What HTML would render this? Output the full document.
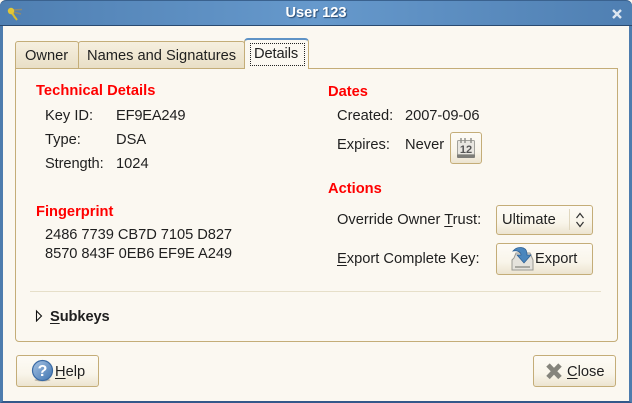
<!DOCTYPE html>
<html>
<head>
<meta charset="utf-8">
<style>
html,body{margin:0;padding:0;background:#fbf8f1;}
body{width:632px;height:403px;position:relative;overflow:hidden;font-family:"Liberation Sans",sans-serif;font-size:14.67px;color:#1f1f1f;}
.t{position:absolute;white-space:nowrap;line-height:16px;}
.h{position:absolute;white-space:nowrap;line-height:16px;color:#ff0000;font-weight:bold;}
.b{position:absolute;box-sizing:border-box;border:1px solid #c4ad78;border-radius:3px;background:linear-gradient(#fdfbf6,#f9f5ea 60%,#ece4d0);}
u{text-underline-offset:2px;}
</style>
</head>
<body>
<div style="position:absolute;left:0;top:0;width:632px;height:403px;box-sizing:border-box;border:3px solid #4d7cae;border-top:0;border-bottom-width:2px;border-radius:6px 6px 0 0;border-bottom-color:#33588a;"></div>
<div style="position:absolute;left:0;top:0;width:632px;height:26px;border-radius:6px 6px 0 0;background:linear-gradient(90deg,#4f7fb2,#6699cc 50%,#4f7fb2);border-top:1px solid #3a628f;border-bottom:1px solid #2a4a70;box-sizing:border-box;"></div>
<svg style="position:absolute;left:0;top:0" width="30" height="26" viewBox="0 0 30 26"><path d="M12 10L22 9.5M13 12L21 14" stroke="#8d8a72" stroke-width="1.6" fill="none"/><path d="M11 12L17 20M12 12L15 18" stroke="#d8bc30" stroke-width="1.9" fill="none"/><circle cx="11" cy="11" r="3.2" fill="#e2c636"/></svg>
<div class="t" style="left:0;width:632px;text-align:center;top:5px;color:#fff;font-weight:bold;text-shadow:1px 1px 1px #2a4a70;">User 123</div>
<svg style="position:absolute;left:612px;top:9px" width="10" height="10" viewBox="0 0 10 10"><path d="M1 1L9 9M9 1L1 9" stroke="#dce6f0" stroke-width="2.4"/></svg>

<div style="position:absolute;left:15px;top:68px;width:603px;height:274px;box-sizing:border-box;border:1px solid #c4ad78;border-radius:0 0 4px 4px;"></div>
<div style="position:absolute;left:15px;top:41px;width:64px;height:28px;box-sizing:border-box;border:1px solid #c4ad78;border-radius:3px 3px 0 0;background:linear-gradient(#f6efdf,#e9dfc6);"></div>
<div style="position:absolute;left:78px;top:41px;width:167px;height:28px;box-sizing:border-box;border:1px solid #c4ad78;border-radius:3px 3px 0 0;background:linear-gradient(#f6efdf,#e9dfc6);"></div>
<div style="position:absolute;left:244px;top:38px;width:65px;height:31px;box-sizing:border-box;border:1px solid #c4ad78;border-top:2px solid #5f93c6;border-bottom:0;border-radius:4px 4px 0 0;background:#fbf8f1;"></div>
<div style="position:absolute;left:250px;top:43px;width:55px;height:23px;box-sizing:border-box;border:1px dotted #222;"></div>
<div class="t" style="left:25px;top:48px;">Owner</div>
<div class="t" style="left:87px;top:48px;">Names and Signatures</div>
<div class="t" style="left:254px;top:46px;letter-spacing:-.1px;">Details</div>

<div class="h" style="left:36px;top:83px;letter-spacing:.05px;">Technical Details</div>
<div class="t" style="left:45px;top:108px;">Key ID:</div><div class="t" style="left:116px;top:108px;letter-spacing:-.2px;">EF9EA249</div>
<div class="t" style="left:45px;top:132px;">Type:</div><div class="t" style="left:116px;top:132px;">DSA</div>
<div class="t" style="left:45px;top:156px;letter-spacing:-.1px;">Strength:</div><div class="t" style="left:116px;top:156px;">1024</div>
<div class="h" style="left:36px;top:204px;">Fingerprint</div>
<div class="t" style="left:45px;top:227px;letter-spacing:-.05px;">2486 7739 CB7D 7105 D827</div>
<div class="t" style="left:45px;top:246px;letter-spacing:-.05px;">8570 843F 0EB6 EF9E A249</div>

<div class="h" style="left:328px;top:84px;">Dates</div>
<div class="t" style="left:337px;top:108px;">Created:</div><div class="t" style="left:405px;top:108px;letter-spacing:-.05px;">2007-09-06</div>
<div class="t" style="left:337px;top:137px;">Expires:</div><div class="t" style="left:405px;top:137px;">Never</div>
<div class="b" style="left:450px;top:132px;width:32px;height:32px;"></div>
<svg style="position:absolute;left:450px;top:132px" width="32" height="32" viewBox="0 0 32 32"><path d="M7 21H25V25Q25 26 24 26H8Q7 26 7 25Z" fill="#7d7d78"/><rect x="7.5" y="8.5" width="17" height="14" rx="1" fill="#e9e7e1" stroke="#a2a29c"/><path d="M11 6v5M15 6v5M21 6v5" stroke="#8a8a85" stroke-width="1.4"/><text x="16" y="21" font-size="11" font-weight="bold" text-anchor="middle" fill="#555" font-family="Liberation Sans">12</text></svg>

<div class="h" style="left:328px;top:181px;">Actions</div>
<div class="t" style="left:337px;top:212px;">Override Owner <u>T</u>rust:</div>
<div class="b" style="left:496px;top:205px;width:97px;height:30px;"></div>
<div class="t" style="left:502px;top:212px;">Ultimate</div>
<div style="position:absolute;left:569px;top:209px;width:1px;height:21px;background:#e0d7bf;"></div>
<svg style="position:absolute;left:575px;top:212px" width="11" height="16" viewBox="0 0 11 16"><path d="M1.5 6L5 1.5L8.5 6M1.5 10L5 14.5L8.5 10" stroke="#333" stroke-width="1.2" fill="none"/></svg>
<div class="t" style="left:337px;top:251px;"><u>E</u>xport Complete Key:</div>
<div class="b" style="left:496px;top:243px;width:97px;height:32px;"></div>
<svg style="position:absolute;left:510px;top:246px" width="25" height="26" viewBox="0 0 25 26"><path d="M4 12L6 7H20L23 14V24H2V14Z" fill="#e4e2dc" stroke="#9a9a94"/><path d="M5 21H20" stroke="#a8a8a2" stroke-width="2"/><path d="M3 5C7 0 16 0 17 7V9H21L14 17L7 9H11C11 6 7 4 3 5Z" fill="#4a86bd" stroke="#2a5c90" stroke-width=".7"/></svg>
<div class="t" style="left:535px;top:251px;">Export</div>

<div style="position:absolute;left:30px;top:291px;width:571px;height:1px;background:#e6dfc9;"></div>
<svg style="position:absolute;left:35px;top:309px" width="8" height="13" viewBox="0 0 8 13"><path d="M1.5 2L6.5 7L1.5 12Z" fill="#fbf8f1" stroke="#111" stroke-width="1.1"/></svg>
<div class="t" style="left:50px;top:309px;font-weight:bold;letter-spacing:-.1px;"><u>S</u>ubkeys</div>

<div class="b" style="left:16px;top:355px;width:83px;height:32px;"></div>
<svg style="position:absolute;left:31px;top:359px" width="23" height="24" viewBox="0 0 23 24"><defs><linearGradient id="g" x1="0" y1="0" x2="1" y2="1"><stop offset="0" stop-color="#a8c4e4"/><stop offset="1" stop-color="#3f74b0"/></linearGradient></defs><ellipse cx="11.5" cy="21" rx="8" ry="1.5" fill="#bdb8aa"/><circle cx="11.5" cy="11.5" r="10" fill="url(#g)" stroke="#3a6aa4" stroke-width="1.2"/><text x="11.5" y="17" font-size="16" font-weight="bold" text-anchor="middle" fill="#fff" font-family="Liberation Sans">?</text></svg>
<div class="t" style="left:55px;top:364px;"><u>H</u>elp</div>

<div class="b" style="left:533px;top:355px;width:83px;height:32px;"></div>
<svg style="position:absolute;left:545px;top:362px" width="18" height="19" viewBox="0 0 18 19"><path d="M3 3L15 15.5M15 3L3 15.5" stroke="#85847c" stroke-width="4.8"/></svg>
<div class="t" style="left:567px;top:364px;"><u>C</u>lose</div>
</body>
</html>
